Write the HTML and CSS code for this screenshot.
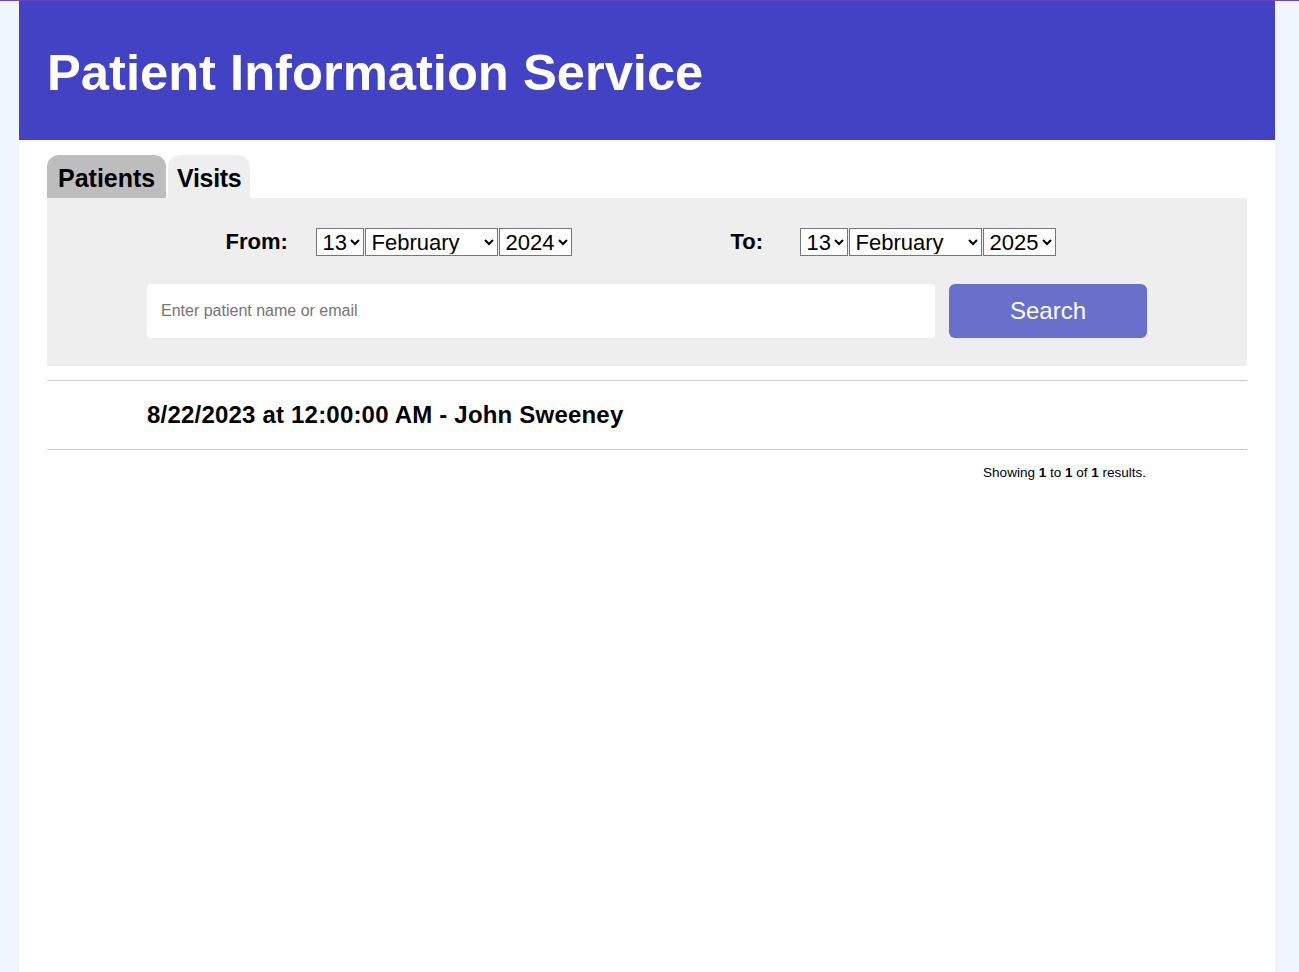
FILE: index.html
```html
<!DOCTYPE html>
<html lang="en">
<head>
<meta charset="utf-8">
<title>Patient Information Service</title>
<link rel="stylesheet" href="styles.css">
</head>
<body>
<div class="topline"></div>
<div class="page">
  <header class="header">
    <h1 class="title">Patient Information Service</h1>
  </header>
  <main class="content">
    <nav class="tabs">
      <div class="tab tab-inactive">Patients</div>
      <div class="tab tab-active">Visits</div>
    </nav>
    <section class="panel">
      <div class="dates">
        <div class="date-group">
          <label class="date-label from-label">From:</label>
          <select class="sel sel-day"><option>13</option></select>
          <select class="sel sel-month"><option>February</option></select>
          <select class="sel sel-year"><option>2024</option></select>
        </div>
        <div class="date-group">
          <label class="date-label to-label">To:</label>
          <select class="sel sel-day"><option>13</option></select>
          <select class="sel sel-month"><option>February</option></select>
          <select class="sel sel-year"><option>2025</option></select>
        </div>
      </div>
      <div class="search-row">
        <input class="search-input" type="text" placeholder="Enter patient name or email">
        <button class="search-btn">Search</button>
      </div>
    </section>
    <section class="results">
      <div class="result-row">
        <div class="inner">8/22/2023 at 12:00:00 AM - John Sweeney</div>
      </div>
      <div class="inner summary">Showing <b>1</b> to <b>1</b> of <b>1</b> results.</div>
    </section>
  </main>
</div>
</body>
</html>
```
FILE: styles.css
```css
html, body {
  margin: 0;
  padding: 0;
}
body {
  background: #eff6ff;
  font-family: "Liberation Sans", Arial, sans-serif;
  color: #000;
  min-height: 972px;
}
.topline {
  height: 1px;
  background: #6a46c2;
}
.page {
  margin-left: 19px;
  width: 1256px;
  background: #fff;
  min-height: 971px;
}
.header {
  background: #4242c4;
  height: 139px;
  padding: 0 28px;
  display: flex;
  align-items: center;
}
.title {
  margin: 0;
  color: #fff;
  font-size: 50.7px;
  font-weight: bold;
  letter-spacing: 0;
  padding-top: 3px;
}
.content {
  padding: 15px 28px 0;
}
.tabs {
  display: flex;
  gap: 2px;
  height: 43px;
  align-items: flex-end;
}
.tab {
  height: 43px;
  display: flex;
  align-items: center;
  padding: 0 10px 0 11px;
  font-size: 25px;
  font-weight: bold;
  border-radius: 12px 12px 0 0;
  box-sizing: border-box;
  padding-top: 4px;
}
.tab-inactive {
  background: #bdbdbd;
  width: 119px;
}
.tab-active {
  background: #eeeeee;
  width: 82px;
  padding-left: 9px;
  letter-spacing: -0.3px;
}
.panel {
  background: #eeeeee;
  padding: 30px 0 28px;
}
.dates {
  display: flex;
  justify-content: center;
  gap: 158px;
  padding-right: 12px;
}
.date-group {
  display: flex;
  align-items: center;
}
.date-label {
  font-size: 22px;
  font-weight: bold;
}
.from-label {
  width: 90px;
}
.to-label {
  width: 69px;
}
.sel {
  height: 28px;
  font-family: "Liberation Sans", Arial, sans-serif;
  font-size: 22px;
  color: #000;
  background: #fff;
  border: 1px solid #767676;
  border-radius: 0;
  padding: 0 0 1px 2px;
  margin: 0 1px 0 0;
  box-sizing: border-box;
}
.sel-day { width: 48px; }
.sel-month { width: 133px; }
.sel-year { width: 73px; }
.search-row {
  width: 1000px;
  margin: 28px auto 0;
  display: flex;
  gap: 14px;
}
.search-input {
  width: 788px;
  height: 54px;
  box-sizing: border-box;
  border: none;
  border-radius: 4px;
  background: #fff;
  padding: 0 14px;
  font-family: "Liberation Sans", Arial, sans-serif;
  font-size: 16px;
  outline: none;
}
.search-input::placeholder {
  color: #757575;
}
.search-btn {
  width: 198px;
  height: 54px;
  border: none;
  border-radius: 6px;
  background: #6870cc;
  color: #fff;
  font-family: "Liberation Sans", Arial, sans-serif;
  font-size: 24px;
  padding: 0;
}
.results {
  margin-top: 14px;
}
.inner {
  width: 1000px;
  margin: 0 auto;
}
.result-row {
  border-top: 1px solid #cccccc;
  border-bottom: 1px solid #cccccc;
  height: 68px;
  display: flex;
  align-items: center;
  font-size: 24px;
  font-weight: bold;
  letter-spacing: 0.2px;
}
.summary {
  text-align: right;
  font-size: 13.5px;
  padding-top: 15px;
  box-sizing: border-box;
  padding-right: 1px;
}
.summary b {
  font-weight: bold;
}
```
